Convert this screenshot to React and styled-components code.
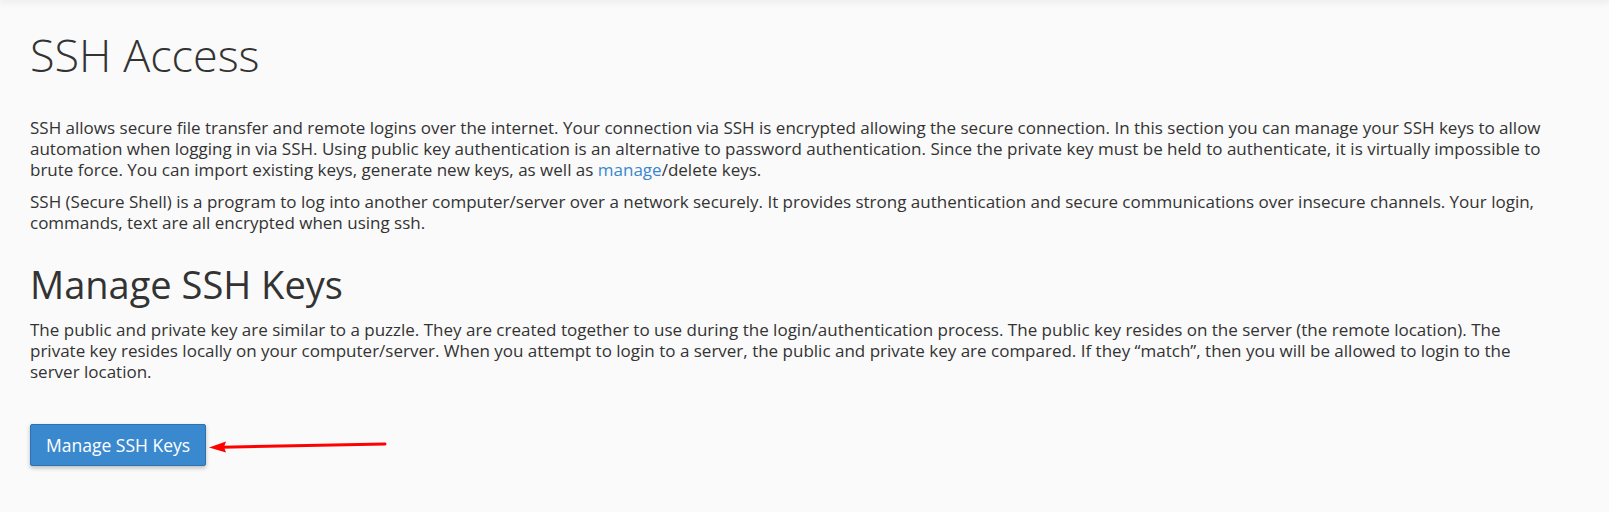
import React from 'react';
import styled, { createGlobalStyle } from 'styled-components';

const GlobalStyle = createGlobalStyle`
	html, body {
		margin: 0;
		padding: 0;
		background: #fafafa;
	}
	body {
		font-family: "Open Sans", "Liberation Sans", sans-serif;
		color: #333;
	}
`

export const TopShadow = styled.div`
	height: 0;
	box-shadow: 0 0 7px 1px rgba(0, 0, 0, 0.18);
`

export const Page = styled.main`
	padding: 30px 14px 40px 30px;
`

export const Title = styled.h1`
	margin: 0 0 37px;
	font-size: 45px;
	font-weight: 300;
	line-height: 1.1;
	color: #333;
`

export const SubTitle = styled.h2`
	margin: 31px 0 14px;
	font-size: 38px;
	font-weight: 400;
	line-height: 1.1;
	color: #333;
`

export const Text = styled.p`
	margin: 0 0 11px;
	font-size: 17px;
	line-height: 21px;
`

export const Link = styled.a`
	color: #3a87cf;
	text-decoration: none;
`

export const Actions = styled.div`
	display: flex;
	align-items: center;
	margin-top: 42px;
`

export const Button = styled.button`
	height: 42px;
	padding: 0 15px;
	font-family: inherit;
	font-size: 17.5px;
	color: #fff;
	background: #3a89cf;
	border: 1px solid #2d72b0;
	border-radius: 2px;
	box-shadow: 0 2px 4px rgba(0, 0, 0, 0.25);
	cursor: pointer;
`

const Arrow = () => (
	<svg width="180" height="16" viewBox="0 0 180 16" style={{ marginLeft: 2 }}>
		<path d="M14 10.2 L177 7" stroke="#f00" strokeWidth="3" strokeLinecap="round" fill="none"/>
		<path d="M1 10.5 L18 4.5 L16 10 L18 15.5 Z" fill="#f00"/>
	</svg>
)

const App = () => {
	return (
		<>
			<GlobalStyle/>
			<TopShadow/>
			<Page>
				<Title>SSH Access</Title>
				<Text>
					SSH allows secure file transfer and remote logins over the internet. Your connection via SSH is encrypted allowing the secure connection. In this section you can manage your SSH keys to allow<br/>
					automation when logging in via SSH. Using public key authentication is an alternative to password authentication. Since the private key must be held to authenticate, it is virtually impossible to<br/>
					brute force. You can import existing keys, generate new keys, as well as <Link href="#">manage</Link>/delete keys.
				</Text>
				<Text>
					SSH (Secure Shell) is a program to log into another computer/server over a network securely. It provides strong authentication and secure communications over insecure channels. Your login,<br/>
					commands, text are all encrypted when using ssh.
				</Text>
				<SubTitle>Manage SSH Keys</SubTitle>
				<Text>
					The public and private key are similar to a puzzle. They are created together to use during the login/authentication process. The public key resides on the server (the remote location). The<br/>
					private key resides locally on your computer/server. When you attempt to login to a server, the public and private key are compared. If they “match”, then you will be allowed to login to the<br/>
					server location.
				</Text>
				<Actions>
					<Button>Manage SSH Keys</Button>
					<Arrow/>
				</Actions>
			</Page>
		</>
	)
}

export default App;
